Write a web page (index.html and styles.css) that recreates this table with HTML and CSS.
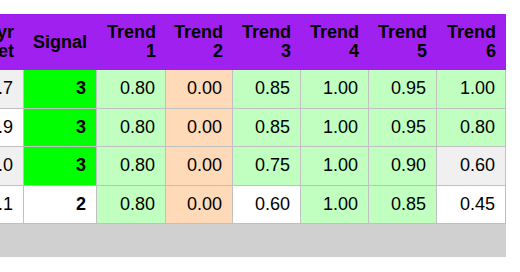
FILE: index.html
```html
<!DOCTYPE html>
<html>
<head>
<meta charset="utf-8">
<link rel="stylesheet" href="styles.css">
</head>
<body>
<div class="page">
  <div class="viewport">
    <table class="grid">
      <colgroup>
        <col class="c-ret">
        <col class="c-signal">
        <col class="c-t69">
        <col class="c-t67">
        <col class="c-t68">
        <col class="c-t68">
        <col class="c-t68">
        <col class="c-t69">
      </colgroup>
      <thead>
        <tr>
          <th>1yr<br>Ret</th>
          <th>Signal</th>
          <th>Trend<br>1</th>
          <th>Trend<br>2</th>
          <th>Trend<br>3</th>
          <th>Trend<br>4</th>
          <th>Trend<br>5</th>
          <th>Trend<br>6</th>
        </tr>
      </thead>
      <tbody>
        <tr>
          <td class="grey">1.7</td>
          <td class="sig green">3</td>
          <td class="lg">0.80</td>
          <td class="peach">0.00</td>
          <td class="lg">0.85</td>
          <td class="lg">1.00</td>
          <td class="lg">0.95</td>
          <td class="lg">1.00</td>
        </tr>
        <tr>
          <td>1.9</td>
          <td class="sig green">3</td>
          <td class="lg">0.80</td>
          <td class="peach">0.00</td>
          <td class="lg">0.85</td>
          <td class="lg">1.00</td>
          <td class="lg">0.95</td>
          <td class="lg">0.80</td>
        </tr>
        <tr>
          <td class="grey">1.0</td>
          <td class="sig green">3</td>
          <td class="lg">0.80</td>
          <td class="peach">0.00</td>
          <td class="lg">0.75</td>
          <td class="lg">1.00</td>
          <td class="lg">0.90</td>
          <td class="grey">0.60</td>
        </tr>
        <tr>
          <td>1.1</td>
          <td class="sig">2</td>
          <td class="lg">0.80</td>
          <td class="peach">0.00</td>
          <td>0.60</td>
          <td class="lg">1.00</td>
          <td class="lg">0.85</td>
          <td>0.45</td>
        </tr>
      </tbody>
    </table>
  </div>
</div>
</body>
</html>
```
FILE: styles.css
```css
html, body {
  margin: 0;
  padding: 0;
  background: #ffffff;
}

.page {
  padding-top: 14px;
  font-family: "Liberation Sans", Arial, sans-serif;
  color: #000;
}

.viewport {
  width: 506px;
  height: 243px;
  overflow: hidden;
  background: #d0d0d0;
}

.grid {
  margin-left: -46px;
  border-collapse: separate;
  border-spacing: 0;
  table-layout: fixed;
  width: 552px;
  font-size: 18px;
}

.c-ret { width: 70px; }
.c-signal { width: 73px; }
.c-t69 { width: 69px; }
.c-t67 { width: 67px; }
.c-t68 { width: 68px; }

.grid th,
.grid td {
  box-sizing: border-box;
  text-align: right;
  white-space: nowrap;
  overflow: hidden;
}

.grid th {
  background: #a020f0;
  font-weight: bold;
  line-height: 19px;
  padding: 9px 10px 9px 0;
  height: 56px;
  vertical-align: middle;
}

.grid td {
  background: #ffffff;
  line-height: 21px;
  padding: 8.25px 10px 8.25px 0;
  border-right: 1px solid #c0c0c0;
  border-bottom: 1px solid #c0c0c0;
}

.grid td.sig { font-weight: bold; }
.grid td.green { background: #00ff00; }
.grid td.lg { background: #c0ffc0; }
.grid td.peach { background: #ffdab9; }
.grid td.grey { background: #f0f0f0; }
```
